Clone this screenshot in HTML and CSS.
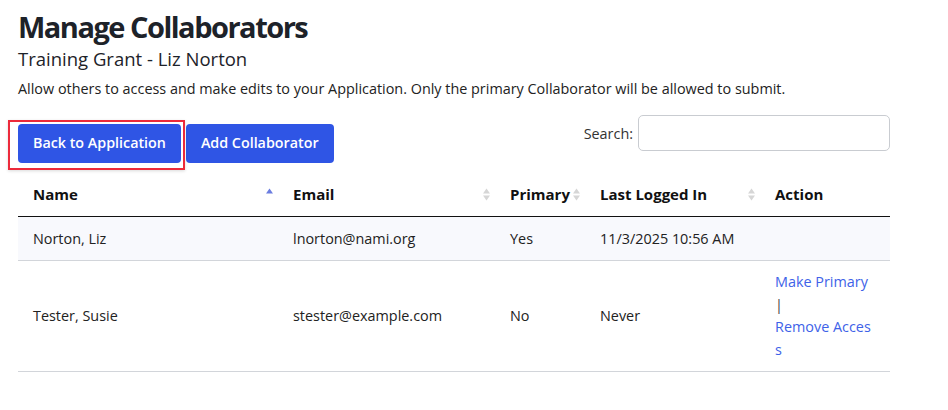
FILE: index.html
```html
<!DOCTYPE html>
<html lang="en">
<head>
<meta charset="utf-8">
<title>Manage Collaborators</title>
<link rel="stylesheet" href="styles.css">
</head>
<body>
<div class="page">
  <h1 class="title">Manage Collaborators</h1>
  <h2 class="subtitle">Training Grant - Liz Norton</h2>
  <p class="desc">Allow others to access and make edits to your Application. Only the primary Collaborator will be allowed to submit.</p>

  <div class="toolbar">
    <div class="actions">
      <span class="highlight-wrap">
        <a class="btn" href="#">Back to Application</a>
        <span class="highlight"></span>
      </span>
      <a class="btn" href="#">Add Collaborator</a>
    </div>
    <label class="search">Search: <input type="search" class="search-input"></label>
  </div>

  <table class="grid">
    <colgroup>
      <col class="c-name"><col class="c-email"><col class="c-primary"><col class="c-last"><col class="c-action">
    </colgroup>
    <thead>
      <tr>
        <th><div class="th-in"><span>Name</span>
          <svg class="sort" width="7" height="13" viewBox="0 0 7 13"><polygon points="0,5.5 3.5,0.5 7,5.5" fill="#6b7de0"/></svg></div></th>
        <th><div class="th-in"><span>Email</span>
          <svg class="sort" width="7" height="13" viewBox="0 0 7 13"><polygon points="0,5.5 3.5,0.5 7,5.5" fill="#d6d6d6"/><polygon points="0,7.5 7,7.5 3.5,12.5" fill="#d6d6d6"/></svg></div></th>
        <th><div class="th-in"><span>Primary</span>
          <svg class="sort" width="7" height="13" viewBox="0 0 7 13"><polygon points="0,5.5 3.5,0.5 7,5.5" fill="#d6d6d6"/><polygon points="0,7.5 7,7.5 3.5,12.5" fill="#d6d6d6"/></svg></div></th>
        <th><div class="th-in"><span>Last Logged In</span>
          <svg class="sort" width="7" height="13" viewBox="0 0 7 13"><polygon points="0,5.5 3.5,0.5 7,5.5" fill="#d6d6d6"/><polygon points="0,7.5 7,7.5 3.5,12.5" fill="#d6d6d6"/></svg></div></th>
        <th><div class="th-in"><span>Action</span></div></th>
      </tr>
    </thead>
    <tbody>
      <tr class="odd">
        <td>Norton, Liz</td>
        <td>lnorton@nami.org</td>
        <td>Yes</td>
        <td>11/3/2025 10:56 AM</td>
        <td></td>
      </tr>
      <tr>
        <td>Tester, Susie</td>
        <td>stester@example.com</td>
        <td>No</td>
        <td>Never</td>
        <td class="action">
          <div><a href="#">Make Primary</a></div>
          <div class="sep">|</div>
          <div><a href="#">Remove Access</a></div>
        </td>
      </tr>
    </tbody>
  </table>
</div>
</body>
</html>
```

FILE: styles.css
```css
* { box-sizing: border-box; }
html, body { margin: 0; padding: 0; background: #fff; }
body {
  font-family: "Open Sans", "DejaVu Sans", sans-serif;
  color: #222;
  font-size: 14.4px;
}
.page {
  width: 872px;
  margin-left: 18px;
  padding-top: 9px;
}
.title {
  font-size: 29px;
  line-height: 36px;
  font-weight: 700;
  letter-spacing: -1.5px;
  color: #1d2229;
  margin: 0;
}
.subtitle {
  font-size: 18.5px;
  line-height: 26px;
  font-weight: 400;
  color: #1d2229;
  margin: 1px 0 0;
}
.desc {
  font-size: 14.4px;
  line-height: 22px;
  margin: 6px 0 0;
  color: #222;
}
.toolbar {
  display: flex;
  justify-content: space-between;
  align-items: flex-start;
  margin-top: 15px;
}
.actions {
  display: flex;
  gap: 5px;
  padding-top: 9px;
}
.highlight-wrap { position: relative; display: inline-flex; }
.highlight {
  position: absolute;
  left: -10px; top: -4px; right: -4px; bottom: -7px;
  border: 2.5px solid #ec2a3b;
  box-shadow: 0 1px 3px rgba(0,0,0,0.15);
  pointer-events: none;
}
.btn {
  display: inline-block;
  background: #2f55e5;
  color: #fff;
  text-decoration: none;
  font-weight: 600;
  font-size: 14.3px;
  line-height: 20px;
  padding: 9px 15px 10px;
  border-radius: 4px;
}
.search {
  display: flex;
  align-items: center;
  gap: 5px;
  color: #333;
  font-size: 14.4px;
}
.search-input {
  width: 252px;
  height: 36px;
  border: 1px solid #c9ccd1;
  border-radius: 5px;
  background: #fff;
  margin: 0;
}
.grid {
  width: 872px;
  table-layout: fixed;
  border-collapse: collapse;
  margin-top: 10px;
}
.c-name { width: 260px; }
.c-email { width: 217px; }
.c-primary { width: 90px; }
.c-last { width: 175px; }
.c-action { width: 130px; }
.grid th {
  text-align: left;
  font-weight: 700;
  font-size: 15px;
  color: #111;
  padding: 10px 5px 11px 15px;
  line-height: 22px;
  border-bottom: 1px solid #111;
}
.th-in {
  display: flex;
  justify-content: space-between;
  align-items: center;
}
.sort { flex: none; display: block; }
.grid td {
  padding: 10px 15px;
  line-height: 22.4px;
  vertical-align: middle;
  border-bottom: 1px solid #d2d5da;
  color: #222;
}
.grid tr.odd td { background: #f8f9fd; padding-top: 11px; }
.action { word-break: break-all; }
.action a { color: #3e62e8; text-decoration: none; }
.sep { color: #444; }
```
